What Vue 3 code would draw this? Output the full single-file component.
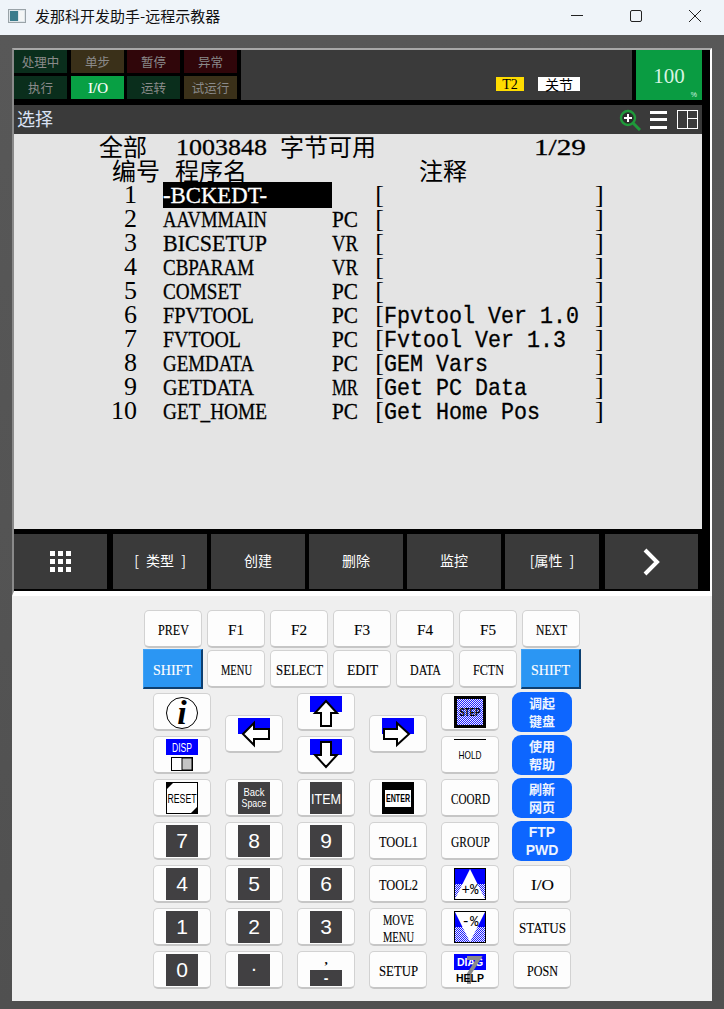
<script setup>
import { h } from 'vue'

// Fixed-pitch text: the string is fitted to `cell` pixels per character.
const Fit = (props) => {
  const cell = Number(props.cell || 13)
  const width = Math.round(cell * props.text.length)
  const height = Number(props.h || 24)
  return h('svg', { width, height, viewBox: `0 0 ${width} ${height}`, style: 'display:block;overflow:visible;flex:none' }, [
    h('text', {
      x: 0,
      y: props.base || 21,
      textLength: width,
      lengthAdjust: 'spacingAndGlyphs',
      fill: 'currentColor',
      stroke: 'currentColor',
      'stroke-width': props.bold || 0.3,
      'font-family': props.family || 'Liberation Serif, serif',
      'font-size': props.size || 24
    }, props.text)
  ])
}
Fit.props = ['text', 'cell', 'h', 'base', 'size', 'family', 'bold']

const statusCells = [
  { t: '处理中', c: 'g' }, { t: '单步', c: 'o' }, { t: '暂停', c: 'r' }, { t: '异常', c: 'r' },
  { t: '执行', c: 'g' }, { t: 'I/O', c: 'on' }, { t: '运转', c: 'g' }, { t: '试运行', c: 'o' }
]
const rows = [
  ['1', '-BCKEDT-', '', ''],
  ['2', 'AAVMMAIN', 'PC', ''],
  ['3', 'BICSETUP', 'VR', ''],
  ['4', 'CBPARAM', 'VR', ''],
  ['5', 'COMSET', 'PC', ''],
  ['6', 'FPVTOOL', 'PC', 'Fpvtool Ver 1.0'],
  ['7', 'FVTOOL', 'PC', 'Fvtool Ver 1.3'],
  ['8', 'GEMDATA', 'PC', 'GEM Vars'],
  ['9', 'GETDATA', 'MR', 'Get PC Data'],
  ['10', 'GET_HOME', 'PC', 'Get Home Pos']
]
const softkeys = ['[ 类型 ]', '创建', '删除', '监控', '[属性 ]']
const fnKeys = ['PREV', 'F1', 'F2', 'F3', 'F4', 'F5', 'NEXT']
const modeKeys = ['MENU', 'SELECT', 'EDIT', 'DATA', 'FCTN']
const k = { cell: 7.8, h: 17, base: 15, size: 15, bold: 0.12 }
const mono = 'Liberation Mono, monospace'
</script>

<template>
  <div class="window">
    <header class="titlebar">
      <svg class="app-icon" width="18" height="14" viewBox="0 0 18 14">
        <rect x="0.5" y="0.5" width="17" height="13" fill="#dfe6ea" stroke="#9aa3a8" />
        <rect x="2" y="2" width="8" height="10" fill="#3c7c8c" />
        <rect x="11" y="2" width="5" height="10" fill="#f4f6f6" />
      </svg>
      <span class="app-title">发那科开发助手-远程示教器</span>
      <div class="win-controls">
        <svg width="12" height="12" viewBox="0 0 12 12"><path d="M0 5.5h12" stroke="#222" fill="none" /></svg>
        <svg width="12" height="12" viewBox="0 0 12 12"><rect x="0.5" y="0.5" width="11" height="11" rx="1.5" stroke="#222" fill="none" /></svg>
        <svg width="12" height="12" viewBox="0 0 12 12"><path d="M0 0l12 12M12 0L0 12" stroke="#222" fill="none" /></svg>
      </div>
    </header>

    <div class="shell">
      <section class="screen">
        <div class="status-row">
          <div class="status-grid">
            <div v-for="(s, i) in statusCells" :key="i" class="status-cell" :class="s.c">
              <Fit v-if="s.c === 'on'" :text="s.t" :cell="6.8" :h="16" :base="13" :size="14" :bold="0.1" />
              <template v-else>{{ s.t }}</template>
            </div>
          </div>
          <div class="status-bar">
            <span class="tag-t2">T2</span>
            <span class="tag-joint">关节</span>
          </div>
          <div class="override">
            <span class="override-num">100</span>
            <span class="override-pct">%</span>
          </div>
        </div>

        <div class="menu-bar">
          <span class="menu-title">选择</span>
          <div class="menu-icons">
            <svg width="22" height="22" viewBox="0 0 22 22">
              <circle cx="9" cy="9" r="7" fill="#2b2b2b" stroke="#1f9a3a" stroke-width="2.4" />
              <path d="M14 14l7 7" stroke="#1f9a3a" stroke-width="3" />
              <path d="M5 9h8M9 5v8" stroke="#fff" stroke-width="2" />
            </svg>
            <div class="burger"><i></i><i></i><i></i></div>
            <div class="panes"><b></b><b class="split"></b></div>
          </div>
        </div>

        <div class="content">
          <div class="hdr hdr-a">
            <span class="cjk w77">全部</span>
            <span class="w104"><Fit text="1003848" /></span>
            <span class="cjk w254">字节可用</span>
            <Fit text="1/29" />
          </div>
          <div class="hdr hdr-b">
            <span class="cjk w63">编号</span><span class="cjk w244">程序名</span><span class="cjk">注释</span>
          </div>
          <div v-for="(r, i) in rows" :key="i" class="row">
            <span class="num">{{ r[0] }}</span>
            <span class="name" :class="{ selected: i === 0 }"><Fit :text="r[1]" /></span>
            <span><Fit v-if="r[2]" :text="r[2]" /></span>
            <span class="note">
              <span class="open">[</span>
              <span><Fit v-if="r[3]" :text="r[3]" :family="mono" /></span>
              <span class="close">]</span>
            </span>
          </div>
        </div>

        <div class="softkeys">
          <div class="soft first">
            <svg width="22" height="22" viewBox="0 0 22 22" fill="#fff">
              <rect x="0" y="0" width="5" height="5" /><rect x="8" y="0" width="5" height="5" /><rect x="16" y="0" width="5" height="5" />
              <rect x="0" y="8" width="5" height="5" /><rect x="8" y="8" width="5" height="5" /><rect x="16" y="8" width="5" height="5" />
              <rect x="0" y="16" width="5" height="5" /><rect x="8" y="16" width="5" height="5" /><rect x="16" y="16" width="5" height="5" />
            </svg>
          </div>
          <div v-for="s in softkeys" :key="s" class="soft label">{{ s }}</div>
          <div class="soft last">
            <svg width="18" height="28" viewBox="0 0 18 28"><path d="M2 2l12 12L2 26" stroke="#fff" stroke-width="4" fill="none" /></svg>
          </div>
        </div>
      </section>

      <section class="pad">
        <div class="fn-grid">
          <button v-for="t in fnKeys" :key="t" class="key"><Fit :text="t" v-bind="k" /></button>
          <button class="key shift"><Fit text="SHIFT" v-bind="k" /></button>
          <button v-for="t in modeKeys" :key="t" class="key"><Fit :text="t" v-bind="k" /></button>
          <button class="key shift"><Fit text="SHIFT" v-bind="k" /></button>
        </div>

        <div class="main-grid">
          <button class="key icon c1 r1">
            <svg width="34" height="34" viewBox="0 0 34 34">
              <circle cx="17" cy="17" r="15.5" fill="#fff" stroke="#000" />
              <text x="17" y="28" text-anchor="middle" class="info-i">i</text>
            </svg>
          </button>
          <button class="key icon c2 r1-2">
            <svg width="32" height="32" viewBox="0 0 32 32">
              <rect width="32" height="16" fill="#0000ff" />
              <polygon points="5,16 16,5 16,11 31,11 31,21 16,21 16,27" fill="#fff" stroke="#000" stroke-width="2" />
            </svg>
          </button>
          <button class="key icon c3 r1">
            <svg width="32" height="32" viewBox="0 0 32 32">
              <rect width="32" height="16" fill="#0000ff" />
              <polygon points="16,5 27,17 21,17 21,30 11,30 11,17 5,17" fill="#fff" stroke="#000" stroke-width="2" />
            </svg>
          </button>
          <button class="key icon c4 r1-2">
            <svg width="32" height="32" viewBox="0 0 32 32">
              <rect width="32" height="16" fill="#0000ff" />
              <polygon points="2,11 15,11 15,5 27,16 15,27 15,21 2,21" fill="#fff" stroke="#000" stroke-width="2" />
            </svg>
          </button>
          <button class="key icon c5 r1">
            <svg width="32" height="32" viewBox="0 0 32 32">
              <defs>
                <pattern id="chk" width="2" height="2" patternUnits="userSpaceOnUse">
                  <rect width="2" height="2" fill="#2020ff" />
                  <rect width="1" height="1" fill="#eeeeff" />
                  <rect x="1" y="1" width="1" height="1" fill="#eeeeff" />
                </pattern>
              </defs>
              <rect x="1.5" y="1.5" width="29" height="29" fill="url(#chk)" stroke="#000" stroke-width="3" />
              <text x="16" y="20" text-anchor="middle" textLength="21" lengthAdjust="spacingAndGlyphs" class="bold-s step">STEP</text>
            </svg>
          </button>
          <button class="key blue c6 r1">调起<br />键盘</button>

          <button class="key icon c1 r2">
            <svg width="32" height="32" viewBox="0 0 32 32">
              <rect width="32" height="16" fill="#0000ff" />
              <text x="16" y="12.5" text-anchor="middle" textLength="20" lengthAdjust="spacingAndGlyphs" class="sans-s disp">DISP</text>
              <rect x="5.5" y="18.5" width="21" height="13" fill="#fff" stroke="#000" />
              <rect x="16" y="19" width="10" height="12" fill="#c4c4c4" stroke="#000" />
            </svg>
          </button>
          <button class="key icon c3 r2">
            <svg width="32" height="32" viewBox="0 0 32 32">
              <rect width="32" height="16" fill="#0000ff" />
              <polygon points="11,3 21,3 21,16 27,16 16,28 5,16 11,16" fill="#fff" stroke="#000" stroke-width="2" />
            </svg>
          </button>
          <button class="key icon c5 r2">
            <svg width="32" height="32" viewBox="0 0 32 32">
              <path d="M0 0.5h32" stroke="#000" />
              <text x="16" y="20" text-anchor="middle" textLength="23" lengthAdjust="spacingAndGlyphs" class="sans-s hold">HOLD</text>
            </svg>
          </button>
          <button class="key blue c6 r2">使用<br />帮助</button>

          <button class="key icon c1 r3">
            <svg width="32" height="32" viewBox="0 0 32 32">
              <rect x="0.5" y="0.5" width="31" height="31" fill="#fff" stroke="#000" />
              <polygon points="0,0 8,0 0,8" fill="#000" />
              <polygon points="32,32 24,32 32,24" fill="#000" />
              <text x="16" y="20.5" text-anchor="middle" textLength="29" lengthAdjust="spacingAndGlyphs" class="sans-s reset">RESET</text>
            </svg>
          </button>
          <button class="key icon c2 r3">
            <svg width="32" height="32" viewBox="0 0 32 32">
              <rect width="32" height="32" fill="#414042" />
              <text x="16" y="14" text-anchor="middle" textLength="21" lengthAdjust="spacingAndGlyphs" class="sans-s bs">Back</text>
              <text x="16" y="24.5" text-anchor="middle" textLength="25" lengthAdjust="spacingAndGlyphs" class="sans-s bs">Space</text>
            </svg>
          </button>
          <button class="key icon c3 r3">
            <svg width="32" height="32" viewBox="0 0 32 32">
              <rect width="32" height="32" fill="#414042" />
              <text x="16" y="21.5" text-anchor="middle" textLength="30" lengthAdjust="spacingAndGlyphs" class="sans-s item">ITEM</text>
            </svg>
          </button>
          <button class="key icon c4 r3">
            <svg width="32" height="32" viewBox="0 0 32 32">
              <rect width="32" height="32" fill="#000" />
              <rect x="3" y="8" width="26" height="17" fill="#fff" />
              <text x="16" y="19.5" text-anchor="middle" textLength="24" lengthAdjust="spacingAndGlyphs" class="bold-s enter">ENTER</text>
            </svg>
          </button>
          <button class="key c5 r3"><Fit text="COORD" v-bind="k" /></button>
          <button class="key blue c6 r3">刷新<br />网页</button>

          <button class="key icon c1 r4"><span class="dark digit">7</span></button>
          <button class="key icon c2 r4"><span class="dark digit">8</span></button>
          <button class="key icon c3 r4"><span class="dark digit">9</span></button>
          <button class="key c4 r4"><Fit text="TOOL1" v-bind="k" /></button>
          <button class="key c5 r4"><Fit text="GROUP" v-bind="k" /></button>
          <button class="key blue latin c6 r4">FTP<br />PWD</button>

          <button class="key icon c1 r5"><span class="dark digit">4</span></button>
          <button class="key icon c2 r5"><span class="dark digit">5</span></button>
          <button class="key icon c3 r5"><span class="dark digit">6</span></button>
          <button class="key c4 r5"><Fit text="TOOL2" v-bind="k" /></button>
          <button class="key icon c5 r5">
            <svg width="32" height="32" viewBox="0 0 32 32">
              <rect width="32" height="16" fill="#0000ff" />
              <rect y="16" width="32" height="16" fill="url(#chk)" />
              <polygon points="16,1 31,31 1,31" fill="#fff" />
              <rect x="0.5" y="0.5" width="31" height="31" fill="none" stroke="#000" />
              <text x="16" y="26" text-anchor="middle" class="mono-s pct">+%</text>
            </svg>
          </button>
          <button class="key c6s r5"><Fit text="I/O" v-bind="k" /></button>

          <button class="key icon c1 r6"><span class="dark digit">1</span></button>
          <button class="key icon c2 r6"><span class="dark digit">2</span></button>
          <button class="key icon c3 r6"><span class="dark digit">3</span></button>
          <button class="key two c4 r6"><Fit text="MOVE" v-bind="k" :base="14.5" /><Fit text="MENU" v-bind="k" :base="14.5" /></button>
          <button class="key icon c5 r6">
            <svg width="32" height="32" viewBox="0 0 32 32">
              <rect width="32" height="16" fill="#0000ff" />
              <rect y="16" width="32" height="16" fill="url(#chk)" />
              <polygon points="1,1 31,1 16,31" fill="#fff" />
              <rect x="0.5" y="0.5" width="31" height="31" fill="none" stroke="#000" />
              <text x="16" y="15" text-anchor="middle" class="mono-s pct">-%</text>
            </svg>
          </button>
          <button class="key c6s r6"><Fit text="STATUS" v-bind="k" /></button>

          <button class="key icon c1 r7"><span class="dark digit">0</span></button>
          <button class="key icon c2 r7"><span class="dark dot">.</span></button>
          <button class="key icon c3 r7">
            <span class="comma-key"><span class="comma">,</span><span class="minus">-</span></span>
          </button>
          <button class="key c4 r7"><Fit text="SETUP" v-bind="k" /></button>
          <button class="key icon c5 r7">
            <svg width="32" height="32" viewBox="0 0 32 32">
              <rect width="32" height="16" fill="#0000ff" />
              <text x="16" y="12" text-anchor="middle" class="bold-s diag">DIAG</text>
              <path d="M13 4h12L15 20v10" stroke="#8a8a8a" stroke-width="4" fill="none" />
              <text x="16" y="28" text-anchor="middle" class="bold-s diag help">HELP</text>
            </svg>
          </button>
          <button class="key c6s r7"><Fit text="POSN" v-bind="k" /></button>
        </div>
      </section>
    </div>
  </div>
</template>

<style scoped>
.window {
  width: 724px;
  height: 1009px;
  display: flex;
  flex-direction: column;
  overflow: hidden;
  font-family: "Liberation Serif", "Noto Sans CJK SC", serif;
}
.titlebar {
  height: 35px;
  flex: none;
  background: #eff4f9;
  display: flex;
  align-items: center;
  padding: 0 0 3px 8px;
  box-sizing: border-box;
}
.app-title {
  margin-left: 9px;
  font: 15px/20px "Noto Sans CJK SC", sans-serif;
  color: #111;
}
.win-controls {
  margin-left: auto;
  display: flex;
  gap: 47px;
  padding-right: 23px;
}
.shell {
  flex: 1;
  background: linear-gradient(#585858, #505050);
  padding: 13px 12px 8px;
  box-sizing: border-box;
  display: flex;
  flex-direction: column;
  min-height: 0;
}
.screen {
  flex: none;
  background: #000;
  border-top: 2px solid #a8a8a8;
  border-left: 2px solid #8a8a8a;
  border-right: 2px solid #fff;
  border-bottom: 5px solid #fff;
  padding-right: 8px;
  height: 548px;
  box-sizing: border-box;
}
.status-row {
  height: 50px;
  display: flex;
}
.status-grid {
  width: 227px;
  flex: none;
  display: grid;
  grid-template-columns: 57px 56px 57px 53px;
  grid-template-rows: 23px 23px;
  row-gap: 3px;
}
.status-cell {
  width: 53px;
  display: flex;
  align-items: center;
  justify-content: center;
  font: 12.5px "Noto Sans CJK SC", sans-serif;
  color: #8a8a8a;
}
.status-cell.g { background: #0a2e1c; }
.status-cell.o { background: #3a3019; }
.status-cell.r { background: #30060a; }
.status-cell.on {
  background: #08a044;
  color: #fff;
}
.status-bar {
  flex: 1;
  background: #3a3a3a;
  margin-right: 4px;
  position: relative;
}
.tag-t2 {
  position: absolute;
  left: 255px;
  top: 27px;
  width: 28px;
  height: 14px;
  background: #ffdc00;
  color: #000;
  font: 14px/15px "Liberation Serif", serif;
  text-align: center;
}
.tag-joint {
  position: absolute;
  left: 297px;
  top: 27px;
  width: 42px;
  height: 14px;
  background: #fff;
  color: #000;
  font: 14px/14px "Noto Sans CJK SC", sans-serif;
  text-align: center;
}
.override {
  width: 66px;
  flex: none;
  background: #0a9c42;
  position: relative;
  display: flex;
  align-items: center;
  justify-content: center;
}
.override-num {
  font: 21px/24px "Liberation Serif", serif;
  color: #d8f4e2;
  margin-top: 2px;
}
.override-pct {
  position: absolute;
  right: 5px;
  bottom: 1px;
  font: 7px/8px "Liberation Sans", sans-serif;
  color: #d8f4e2;
}
.menu-bar {
  margin-top: 5px;
  height: 29px;
  background: #3a3a3a;
  display: flex;
  align-items: center;
  padding-left: 3px;
}
.menu-title {
  font: 18px/24px "Noto Sans CJK SC", sans-serif;
  color: #d9e2f4;
  margin-top: -4px;
}
.menu-icons {
  margin-left: auto;
  display: flex;
  align-items: center;
  padding-right: 4px;
}
.burger {
  margin-left: 9px;
  width: 17px;
  height: 18px;
  display: flex;
  flex-direction: column;
  justify-content: space-between;
}
.burger i {
  display: block;
  height: 3px;
  background: #fff;
}
.panes {
  margin-left: 10px;
  width: 21px;
  height: 19px;
  box-sizing: border-box;
  border: 1.5px solid #fff;
  display: flex;
}
.panes b {
  flex: 1;
}
.panes .split {
  border-left: 1.5px solid #fff;
  background: linear-gradient(transparent 7px, #fff 7px, #fff 8.5px, transparent 8.5px);
}
.content {
  height: 395px;
  background: #e4e4e4;
  color: #000;
  font: 26px/26px "Liberation Serif", serif;
}
.hdr {
  display: flex;
  height: 24px;
}
.hdr span {
  flex: none;
}
.hdr-a { padding-left: 85px; }
.hdr-b { padding-left: 98px; }
.cjk {
  font: 24px/24px "Noto Sans CJK SC", sans-serif;
}
.w77 { width: 77px; }
.w104 { width: 104px; }
.w254 { width: 254px; }
.w63 { width: 63px; }
.w244 { width: 244px; }
.row {
  display: grid;
  grid-template-columns: 149px 169px 39px 234px;
  height: 24px;
}
.num {
  padding-right: 26px;
  text-align: right;
}
.selected {
  background: #000;
  color: #fff;
}
.note {
  display: grid;
  grid-template-columns: 13px 208px 13px;
}
.open { text-align: right; }
.close { padding-left: 3px; }
.softkeys {
  margin-top: 5px;
  height: 55px;
  display: flex;
  gap: 4px;
}
.soft {
  width: 94px;
  flex: none;
  background: #3a3a3a;
  color: #fff;
  display: flex;
  align-items: center;
  justify-content: center;
  font: 14px "Noto Sans CJK SC", "Liberation Sans", sans-serif;
  white-space: pre;
}
.soft.label {
  word-spacing: 4px;
  padding-bottom: 3px;
  box-sizing: border-box;
}
.soft.first {
  width: 93px;
  margin-right: 2px;
}
.soft.last {
  width: 93px;
  margin-left: 2px;
}
.pad {
  flex: 1;
  background: #efefef;
  padding: 14px 0 0;
  min-height: 0;
}
.fn-grid {
  margin-left: 132px;
  display: grid;
  grid-template-columns: repeat(7, 58px);
  grid-auto-rows: 38px;
  column-gap: 5px;
  row-gap: 2px;
}
.main-grid {
  margin-left: 141px;
  margin-top: 5px;
  display: grid;
  grid-template-columns: repeat(6, 58px);
  grid-template-rows: repeat(7, 38px);
  column-gap: 14px;
  row-gap: 5px;
}
.key {
  box-sizing: border-box;
  margin: 0;
  padding: 0;
  background: #fdfdfd;
  border: 1px solid #d2d2d2;
  border-bottom: 2px solid #c6c6c6;
  border-radius: 5px;
  color: #000;
  font: 13.33px/17px "Liberation Serif", serif;
  display: flex;
  align-items: center;
  justify-content: center;
  text-align: center;
  overflow: visible;
}
.key svg {
  overflow: visible;
}
.key.two {
  flex-direction: column;
}
.key.icon {
  align-items: flex-start;
  padding-top: 2px;
}
.key.shift {
  margin: -1px;
  background: #2b96f3;
  color: #fff;
  border-radius: 0;
  border: 1px solid #3fa2f5;
  border-right: 2px solid #0d3f70;
  border-bottom: 2px solid #0d3f70;
}
.key.blue {
  margin: -1px;
  background: #0d66ff;
  color: #eef4ff;
  border: none;
  border-radius: 9px;
  font: 700 13px/18px "Noto Sans CJK SC", sans-serif;
}
.key.blue.latin {
  font: 700 14px/18px "Liberation Sans", sans-serif;
}
.c1 { grid-column: 1; }
.c2 { grid-column: 2; }
.c3 { grid-column: 3; }
.c4 { grid-column: 4; }
.c5 { grid-column: 5; }
.c6, .c6s { grid-column: 6; }
.r1 { grid-row: 1; }
.r2 { grid-row: 2; }
.r3 { grid-row: 3; }
.r4 { grid-row: 4; }
.r5 { grid-row: 5; }
.r6 { grid-row: 6; }
.r7 { grid-row: 7; }
.r1-2 {
  grid-row: 1 / span 2;
  align-self: center;
  height: 38px;
}
.dark {
  width: 32px;
  height: 32px;
  box-sizing: border-box;
  background: #414042;
  color: #fff;
  display: flex;
  align-items: center;
  justify-content: center;
  font-family: "Liberation Sans", sans-serif;
}
.digit { font-size: 21px; line-height: 32px; }
.dot {
  font: 700 14px/14px "Liberation Sans", sans-serif;
  padding-bottom: 9px;
}
.comma-key {
  width: 32px;
  height: 32px;
  display: flex;
  flex-direction: column;
}
.comma {
  height: 16px;
  font: 700 13px/12px "Liberation Serif", serif;
}
.minus {
  height: 16px;
  background: #414042;
  color: #fff;
  font: 700 14px/16px "Liberation Sans", sans-serif;
}
.info-i {
  font: italic 700 34px "Liberation Serif", serif;
  fill: #000;
}
.sans-s { font-family: "Liberation Sans", sans-serif; }
.bold-s {
  font-family: "Liberation Sans", sans-serif;
  font-weight: 700;
}
.mono-s { font-family: "Liberation Mono", monospace; }
.step { font-size: 11px; fill: #000; }
.disp { font-size: 12px; fill: #fff; }
.hold { font-size: 11px; fill: #000; }
.reset { font-size: 12px; fill: #000; }
.enter { font-size: 10px; fill: #000; }
.bs { font-size: 11.5px; fill: #fff; }
.item { font-size: 15px; fill: #fff; }
.pct { font-size: 14px; fill: #000; }
.diag { font-size: 10.5px; fill: #fff; }
.diag.help { fill: #000; }
</style>
